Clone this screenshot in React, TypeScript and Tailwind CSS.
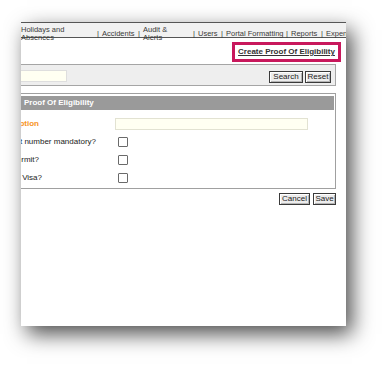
import React from "react";

const NavSep = () => <span className="w-[5px] shrink-0">|</span>;

const Btn = ({ label, w }: { label: string; w: string }) => (
  <button
    type="button"
    className={`${w} h-[12px] shrink-0 flex items-center justify-center border border-[#3a3a3a] bg-[#ececec] shadow-[inset_1px_1px_0_#fff,inset_-1px_-1px_0_#b5b5b5] text-[8px] leading-none text-[#222]`}
  >
    {label}
  </button>
);

const CheckRow = ({ label, end }: { label: string; end: string }) => (
  <div className="flex h-[18px] items-center">
    <div className="w-[96px] shrink-0 flex">
      <div className={`${end} flex justify-end whitespace-nowrap text-[8px] text-[#222]`}>{label}</div>
    </div>
    <div className="w-[10px] h-[10px] border border-[#6a6a6a] bg-white rounded-[1px]" />
  </div>
);

export default function App() {
  return (
    <div className="w-[388px] h-[368px] bg-white pl-[21px] pt-[22px] font-['Liberation_Sans',Arial,sans-serif]">
      <div className="w-[325px] h-[304px] bg-white overflow-hidden shadow-[6px_8px_20px_rgba(0,0,0,0.7)]">
        {/* top menu */}
        <div className="h-[16px] border-t border-b border-[#555] bg-[#f1f1f1]">
          <div className="flex items-center h-[16px] mt-[3px] whitespace-nowrap text-[7.5px] leading-[8px] text-[#3a3a3a]">
            <div className="w-[76px] shrink-0">
              Holidays and
              <br />
              Absences
            </div>
            <NavSep />
            <span className="w-[36px] shrink-0">Accidents</span>
            <NavSep />
            <div className="w-[50px] shrink-0">
              Audit &amp;
              <br />
              Alerts
            </div>
            <NavSep />
            <span className="w-[23px] shrink-0">Users</span>
            <NavSep />
            <span className="w-[60px] shrink-0">Portal Formatting</span>
            <NavSep />
            <span className="w-[30px] shrink-0">Reports</span>
            <NavSep />
            <span className="shrink-0">Expenses</span>
          </div>
        </div>

        {/* create link */}
        <div className="h-[26px] flex justify-end items-start pt-[4px] pr-[5px]">
          <div className="w-[109px] h-[20px] border-[3px] border-[#c8185c] flex items-center justify-center">
            <a href="#" className="text-[8px] font-bold underline text-[#333] whitespace-nowrap">
              Create Proof Of Eligibility
            </a>
          </div>
        </div>

        {/* search bar */}
        <div className="h-[22px] -ml-[6px] mr-[10px] border border-[#a5a5a5] bg-[#eeeeee] flex items-center pr-[4px]">
          <input
            className="w-[51px] h-[12px] mt-[2px] border border-[#dedede] bg-[#fffff2] outline-none"
            readOnly
          />
          <div className="flex-1" />
          <div className="flex gap-[2px] mt-[3px]">
            <Btn label="Search" w="w-[34px]" />
            <Btn label="Reset" w="w-[26px]" />
          </div>
        </div>

        {/* panel */}
        <div className="mt-[7px] -ml-[6px] mr-[10px] border border-[#a0a0a0] pt-[2px] pr-px pb-px">
          <div className="h-[14px] bg-[#9a9a9a] flex items-center pl-[8px] text-[8px] font-bold text-white">
            Proof Of Eligibility
          </div>
          <div className="mt-[4px] pl-[6px]">
            <div className="flex h-[19px] items-center">
              <div className="w-[93px] shrink-0 flex">
                <div className="w-[17px] flex justify-end whitespace-nowrap text-[8px] font-bold text-[#f7931e]">
                  Description
                </div>
              </div>
              <input
                className="w-[193px] h-[12px] border border-[#e2e2d2] bg-[#fffff2] outline-none"
                readOnly
              />
            </div>
            <CheckRow label="Is document number mandatory?" end="w-[74px]" />
            <CheckRow label="Requires work permit?" end="w-[17px]" />
            <CheckRow label="Requires Visa?" end="w-[20px]" />
          </div>
        </div>

        {/* actions */}
        <div className="mt-[4px] mr-[10px] flex justify-end gap-[3px]">
          <Btn label="Cancel" w="w-[31px]" />
          <Btn label="Save" w="w-[23px]" />
        </div>
      </div>
    </div>
  );
}
